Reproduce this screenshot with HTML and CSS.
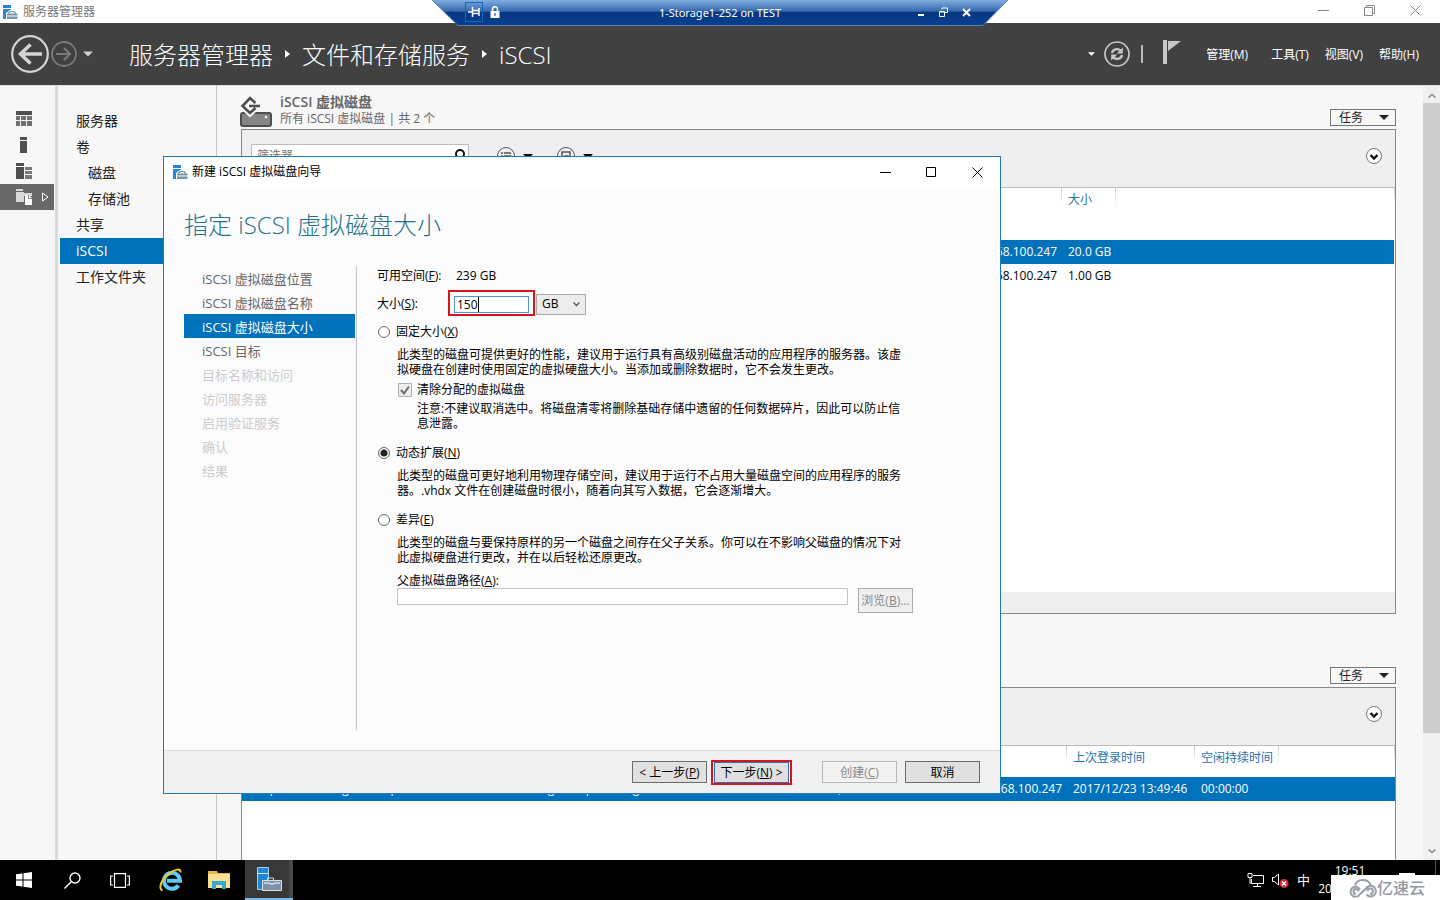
FILE: index.html
```html
<!DOCTYPE html>
<html lang="zh-CN">
<head>
<meta charset="utf-8">
<title>服务器管理器</title>
<link rel="stylesheet" href="styles.css">
</head>
<body>
<svg class="defs" aria-hidden="true">
  <symbol id="server" viewBox="0 0 16 16">
    <path fill="#2a86cf" d="M1 1h8v3H1zM1 5h8v2L5 9v6H1z"/>
    <path fill="#fff" d="M4 9l4-3h5l3 3v7H4z"/>
    <path fill="none" stroke="#7495ab" stroke-width="1.2" d="M6 9.500 8 7.500h4l2 2"/>
    <path fill="#7495ab" d="M5 9.500h10.500v2H5zM5 12.500h10.500V15H5z"/>
  </symbol>
  <symbol id="chev" viewBox="0 0 16 16">
    <circle cx="8" cy="8" r="7.500" fill="#fff" stroke="#777"/>
    <path d="M4.500 7 8 10.500 11.500 7" fill="none" stroke="#111" stroke-width="2.400"/>
  </symbol>
  <symbol id="down" viewBox="0 0 10 5"><path d="M0 0h10L5 5z" fill="currentColor"/></symbol>
</svg>

<header class="titlebar">
  <svg class="app-icon"><use href="#server"/></svg>
  <span class="app-name">服务器管理器</span>
  <div class="win-controls">
    <button aria-label="最小化"><svg width="11" height="11" viewBox="0 0 11 11"><path d="M0 5.500h11"/></svg></button>
    <button aria-label="还原"><svg width="11" height="11" viewBox="0 0 11 11"><path d="M.5 2.500h8v8h-8zM2.500 2.500v-2h8v8h-2"/></svg></button>
    <button aria-label="关闭"><svg width="11" height="11" viewBox="0 0 11 11"><path d="m.5.5 10 10m0-10-10 10"/></svg></button>
  </div>
</header>

<div class="remote-bar">
  <svg class="remote-shape" viewBox="0 0 576 26" preserveAspectRatio="none">
    <defs><linearGradient id="rb" x2="0" y2="1"><stop offset="0" stop-color="#80ace0"/><stop offset=".44" stop-color="#3569ad"/><stop offset=".48" stop-color="#07377f"/><stop offset="1" stop-color="#083f91"/></linearGradient></defs>
    <path fill="url(#rb)" d="M0 0h576l-25 25.500H26z"/>
    <path fill="none" stroke="#5f7fac" d="m0 0 26 25.500h525L576 0"/>
  </svg>
  <div class="remote-content">
    <button class="pin" aria-label="固定"><svg width="12" height="10" viewBox="0 0 12 10" fill="none" stroke="#fff" stroke-width="1.500"><path d="M0 5h4M4.500 0v10M4.500 3.500h6M4.500 6.500h6M11 1v8"/></svg></button>
    <svg class="lock" width="10" height="12" viewBox="0 0 10 12"><path d="M2.500 6V3a2.500 2.300 0 0 1 5 0v3" fill="none" stroke="#fff" stroke-width="1.500"/><path d="M.5 5h9v7h-9z" fill="#fff"/><path d="M4.500 7h1v3h-1z" fill="#07377f"/></svg>
    <span class="remote-name">1-Storage1-252 on TEST</span>
    <button aria-label="最小化会话"><svg width="8" height="10" viewBox="0 0 8 10"><path d="M1 7h6v2H1z" fill="#fff"/></svg></button>
    <button aria-label="还原会话"><svg width="9" height="10" viewBox="0 0 9 10" fill="none" stroke="#fff"><path d="M.5 5h5v4.500h-5zM.5 4.500h5M3 2.500V1h5.500v4.500H6"/></svg></button>
    <button aria-label="断开会话"><svg width="9" height="9" viewBox="0 0 9 9"><path d="m1 1 7 7m0-7-7 7" stroke="#fff" stroke-width="2"/></svg></button>
  </div>
</div>

<nav class="banner">
  <button class="round" aria-label="后退"><svg width="38" height="38" viewBox="0 0 38 38" fill="none" stroke="#d4d4d4"><circle cx="19" cy="19" r="17.800" stroke-width="2.200"/><path stroke-width="3.600" d="M31 19H9.500M19.500 9.500 9.500 19l10 9.500"/></svg></button>
  <button class="round" aria-label="前进"><svg width="26" height="26" viewBox="0 0 26 26" fill="none" stroke="#7a7a7a"><circle cx="13" cy="13" r="12" stroke-width="1.800"/><path stroke-width="2.200" d="M5 13h14M13 7l6 6-6 6"/></svg></button>
  <button class="hist" aria-label="历史记录"><svg width="10" height="6"><use href="#down"/></svg></button>
  <div class="crumbs">
    <a href="#">服务器管理器</a><svg width="5" height="8" viewBox="0 0 5 8"><path fill="#fff" d="M0 0v8l5-4z"/></svg>
    <a href="#">文件和存储服务</a><svg width="5" height="8" viewBox="0 0 5 8"><path fill="#fff" d="M0 0v8l5-4z"/></svg>
    <a href="#" class="leaf">iSCSI</a>
  </div>
  <div class="tools">
    <svg width="7" height="4"><use href="#down"/></svg>
    <button class="refresh" aria-label="刷新"><svg width="26" height="26" viewBox="0 0 26 26" fill="none" stroke="#c8c8c8"><circle cx="13" cy="13" r="12" stroke-width="1.700"/><path stroke-width="2.400" d="M8 12a5 4.500 0 0 1 8.500-2.500M18 14a5 4.500 0 0 1-8.500 2.500"/><path fill="#c8c8c8" stroke="none" d="M18.800 6.500v6h-6zM7.200 19.500v-6h6z"/></svg></button>
    <i class="bar"></i>
    <button class="flag" aria-label="通知"><svg width="18" height="24" viewBox="0 0 18 24"><path fill="#c8c8c8" d="M0 0h4v24H0zM5 1h13L5 11z"/></svg></button>
    <div class="menu"><button class="manage">管理(M)</button><button>工具(T)</button><button>视图(V)</button><button>帮助(H)</button></div>
  </div>
</nav>

<main class="workspace">
  <nav class="rail">
    <button aria-label="仪表板"><svg width="16" height="16" viewBox="0 0 16 16"><path fill="#505050" d="M0 0h16v4H0z"/><path fill="#707070" d="M0 5h4v4H0zM5 5h5v4H5zM11 5h5v4h-5zM0 10h4v5H0zM5 10h5v5H5zM11 10h5v5h-5z"/></svg></button>
    <button aria-label="本地服务器"><svg width="16" height="16" viewBox="0 0 16 16"><path fill="#505050" d="M4 0h7v3H4zM4 4h7v12H4z"/></svg></button>
    <button aria-label="所有服务器"><svg width="16" height="16" viewBox="0 0 16 16"><path fill="#505050" d="M0 0h8v3H0zM0 4h8v12H0z"/><path fill="#777" d="M9 4h7v3H9zM9 8h7v3H9zM9 12h7v4H9z"/></svg></button>
    <button class="on" aria-label="文件和存储服务"><svg width="17" height="16" viewBox="0 0 17 16"><path fill="#d8d8d8" d="M0 0h7v2H0zM0 3h8v1h8v3H8v6H0z"/><path fill="#fff" d="M9 6h4l3 3v7H9z"/><path fill="none" stroke="#888" d="M12.500 6v3.500H16"/></svg><svg class="arrow" width="7" height="10" viewBox="0 0 7 10"><path fill="none" stroke="#fff" d="M.5 1v8L6 5z"/></svg></button>
  </nav>
  <nav class="side">
    <a href="#">服务器</a><a href="#">卷</a><a href="#" class="sub">磁盘</a><a href="#" class="sub">存储池</a><a href="#">共享</a><a href="#" class="on">iSCSI</a><a href="#">工作文件夹</a>
  </nav>
  <div class="content">
    <section class="tile first">
      <header class="tile-head">
        <svg width="32" height="31" viewBox="0 0 32 31"><rect x="1" y="17" width="30" height="13" rx="2" fill="#858585" stroke="#4d4d4d" stroke-width="2"/><circle cx="26" cy="21" r="1.200" fill="#fff"/><path d="M16 7 10 1.500 1.500 10 10 18l6-5.500" fill="none" stroke="#f7f7f7" stroke-width="5"/><path d="m15.500 7-5.500-5L2.500 10 10 17l5.500-5M9 10h11" fill="none" stroke="#4d4d4d" stroke-width="2.600"/></svg>
        <div class="tile-title"><h2>iSCSI 虚拟磁盘</h2><p>所有 iSCSI 虚拟磁盘 | 共 2 个</p></div>
        <button class="tasks">任务<svg width="10" height="5"><use href="#down"/></svg></button>
      </header>
      <div class="panel">
        <div class="filter">
          <label class="search"><input type="text" placeholder="筛选器" aria-label="筛选器"><svg width="12" height="14" viewBox="0 0 12 14" fill="none" stroke="#111" stroke-width="2"><circle cx="7" cy="5" r="4"/><path d="m4 8-4 5"/></svg></label>
          <button aria-label="筛选条件"><svg width="18" height="18" viewBox="0 0 18 18" fill="none" stroke="#555"><circle cx="9" cy="9" r="8.500"/><path stroke-width="1.500" d="M4 6h2m1 0h7M4 9h2m1 0h7M4 12h2m1 0h7"/></svg><svg width="10" height="5"><use href="#down"/></svg></button>
          <button aria-label="保存查询"><svg width="18" height="18" viewBox="0 0 18 18" fill="none" stroke="#555"><circle cx="9" cy="9" r="8.500"/><path stroke-width="1.500" d="M5 5h8v8H5zM7 9h4v4"/></svg><svg width="10" height="5"><use href="#down"/></svg></button>
          <button class="expand" aria-label="展开"><svg width="16" height="16"><use href="#chev"/></svg></button>
        </div>
        <table class="disks">
          <colgroup><col class="c-target"><col class="c-size"><col></colgroup>
          <thead><tr><th></th><th>大小</th><th></th></tr></thead>
          <tbody>
            <tr class="on"><td class="end">192.168.100.247</td><td>20.0 GB</td><td></td></tr>
            <tr><td class="end">192.168.100.247</td><td>1.00 GB</td><td></td></tr>
          </tbody>
        </table>
        <div class="panel-foot"></div>
      </div>
    </section>
    <section class="tile second">
      <header class="tile-head"><button class="tasks">任务<svg width="10" height="5"><use href="#down"/></svg></button></header>
      <div class="panel">
        <div class="filter"><button class="expand" aria-label="展开"><svg width="16" height="16"><use href="#chev"/></svg></button></div>
        <table class="targets">
          <colgroup><col class="c-name"><col class="c-iqn"><col class="c-init"><col class="c-login"><col class="c-idle"><col></colgroup>
          <thead><tr><th></th><th></th><th></th><th>上次登录时间</th><th>空闲持续时间</th><th></th></tr></thead>
          <tbody><tr class="on"><td>esxp-node-storage-test.1p</td><td>-storage-testp-0storage</td><td class="end">, iSCSI Initiator Address:192.168.100.247</td><td>2017/12/23 13:49:46</td><td>00:00:00</td><td></td></tr></tbody>
        </table>
      </div>
    </section>
  </div>
  <div class="scroll" aria-hidden="true">
    <svg width="8" height="5" viewBox="0 0 8 5"><path d="m.5 4.500 3.500-3 3.500 3"/></svg>
    <div class="track"><i></i></div>
    <svg width="8" height="5" viewBox="0 0 8 5"><path d="m.5.5 3.500 3 3.500-3"/></svg>
  </div>
</main>

<div class="dialog" role="dialog" aria-labelledby="dlg">
  <header class="dlg-bar">
    <svg class="app-icon"><use href="#server"/></svg><span id="dlg">新建 iSCSI 虚拟磁盘向导</span>
    <div class="dlg-controls">
      <button aria-label="最小化"><svg width="11" height="11" viewBox="0 0 11 11"><path d="M0 5.500h11"/></svg></button>
      <button aria-label="最大化"><svg width="11" height="11" viewBox="0 0 11 11"><path d="M.5.5h9v9h-9z"/></svg></button>
      <button aria-label="关闭"><svg width="11" height="11" viewBox="0 0 11 11"><path d="m.5.5 10 10m0-10-10 10"/></svg></button>
    </div>
  </header>
  <h1>指定 iSCSI 虚拟磁盘大小</h1>
  <div class="dlg-body">
    <ol class="steps">
      <li>iSCSI 虚拟磁盘位置</li><li>iSCSI 虚拟磁盘名称</li><li class="on">iSCSI 虚拟磁盘大小</li><li>iSCSI 目标</li><li class="off">目标名称和访问</li><li class="off">访问服务器</li><li class="off">启用验证服务</li><li class="off">确认</li><li class="off">结果</li>
    </ol>
    <form class="form">
      <div class="row free"><span class="lbl">可用空间(<u>F</u>):</span><output>239 GB</output></div>
      <div class="row size"><label class="lbl" for="size">大小(<u>S</u>):</label>
        <span class="mark"><input id="size" type="text" value="150"><i class="caret"></i></span>
        <span class="unit"><select aria-label="单位"><option>GB</option><option>MB</option><option>TB</option></select><svg width="7" height="5" viewBox="0 0 7 5"><path d="m.5.5 3 3 3-3" fill="none" stroke="#555" stroke-width="1.300"/></svg></span>
      </div>
      <label class="opt"><input type="radio" name="kind">固定大小(<u>X</u>)</label>
      <p class="desc">此类型的磁盘可提供更好的性能，建议用于运行具有高级别磁盘活动的应用程序的服务器。该虚<br>拟硬盘在创建时使用固定的虚拟硬盘大小。当添加或删除数据时，它不会发生更改。</p>
      <label class="chk"><input type="checkbox" checked disabled><svg width="14" height="14" viewBox="0 0 14 14"><path d="M.5.5h13v13H.5z" fill="#eee" stroke="#b0b0b0"/><path d="m3 7 3 3.500L11 3.500" fill="none" stroke="#6d6d6d" stroke-width="2"/></svg>清除分配的虚拟磁盘</label>
      <p class="desc hint">注意:不建议取消选中。将磁盘清零将删除基础存储中遗留的任何数据碎片，因此可以防止信<br>息泄露。</p>
      <label class="opt later"><input type="radio" name="kind" checked>动态扩展(<u>N</u>)</label>
      <p class="desc">此类型的磁盘可更好地利用物理存储空间，建议用于运行不占用大量磁盘空间的应用程序的服务<br>器。.vhdx 文件在创建磁盘时很小，随着向其写入数据，它会逐渐增大。</p>
      <label class="opt later"><input type="radio" name="kind">差异(<u>E</u>)</label>
      <p class="desc">此类型的磁盘与要保持原样的另一个磁盘之间存在父子关系。你可以在不影响父磁盘的情况下对<br>此虚拟硬盘进行更改，并在以后轻松还原更改。</p>
      <label class="path-lbl" for="path">父虚拟磁盘路径(<u>A</u>):</label>
      <div class="path"><input id="path" type="text" disabled><button type="button" disabled>浏览(<u>B</u>)...</button></div>
    </form>
  </div>
  <footer class="dlg-foot">
    <button>&lt; 上一步(<u>P</u>)</button>
    <span class="mark"><button class="next">下一步(<u>N</u>) &gt;</button></span>
    <button class="create" disabled>创建(<u>C</u>)</button>
    <button>取消</button>
  </footer>
</div>

<footer class="taskbar">
  <button aria-label="开始"><svg width="16" height="16" viewBox="0 0 16 16"><path fill="#fff" d="m0 2.300 6.500-.9v6.100H0zM7.500 1.200 16 0v7.500H7.500zM0 8.500h6.500v6.100L0 13.700zM7.500 8.500H16V16l-8.500-1.200z"/></svg></button>
  <button aria-label="搜索"><svg width="17" height="17" viewBox="0 0 17 17" fill="none" stroke="#fff" stroke-width="1.400"><circle cx="11" cy="6" r="5"/><path d="m7.500 9.500-7 7"/></svg></button>
  <button aria-label="任务视图"><svg width="20" height="15" viewBox="0 0 20 15" fill="none" stroke="#fff" stroke-width="1.200"><path d="M4.500.6h11v13.800h-11zM3 3H.6v9H3M17 3h2.400v9H17"/></svg></button>
  <button class="ie" aria-label="Internet Explorer"><svg width="24" height="24" viewBox="0 0 24 24" fill="none"><path stroke="#5fcaf4" stroke-width="4" d="M19.500 17.500A8 8 0 1 1 21 12.800H8"/><path stroke="#f3ce2b" stroke-width="2" d="M3.500 22.500C-1 21 2 11 10 5.500 16 1 22 0 21.500 4.500"/></svg></button>
  <button aria-label="文件资源管理器"><svg width="22" height="18" viewBox="0 0 22 18"><path fill="#e8b84f" d="M0 0h9l1 2h12v4H0z"/><path fill="#fbe08f" d="M0 3h22v14H0z"/><path fill="#35a6d5" d="M4 10h14v8h-4v-4H8v4H4z"/></svg></button>
  <button class="on" aria-label="服务器管理器"><svg width="26" height="26" viewBox="0 0 26 26"><path fill="#1f86d6" stroke="#9fd1f5" d="M1.500 1.500h11v22h-11z"/><path stroke="#d6ecfb" d="M1 7.500h12"/><path fill="none" stroke="#c9d6e0" d="M11.500 14v-2h6v2"/><path fill="#7e93a8" stroke="#d6e0e8" d="M6.500 14.500h19v10h-19z"/><path stroke="#fff" fill="none" d="M8 17h6v1h4v-1h6"/></svg></button>
  <div class="tray">
    <svg width="17" height="14" viewBox="0 0 17 14" fill="none" stroke="#fff"><path d="M6 2.500h10.500v8h-12V6M1 .5h4v4H1zM3 5v6M6 13.500h8M10.500 11v2"/></svg>
    <svg width="17" height="15" viewBox="0 0 17 15"><path fill="none" stroke="#fff" d="M.5 4.500h2l4-3.500v11l-4-3.500h-2z"/><circle cx="12" cy="10.500" r="4.500" fill="#d5283c"/><path stroke="#fff" stroke-width="1.400" d="m10 8.500 4 4m0-4-4 4"/></svg>
    <span class="ime">中</span>
    <div class="clock"><span>19:51</span><span>2017/12/24</span></div>
    <i class="action"></i><i class="peek"></i>
  </div>
</footer>
<div class="watermark"><svg width="28" height="21" viewBox="0 0 28 21" fill="none" stroke="#999fa9" stroke-width="2"><path d="M6 8.500a8 7 0 0 1 15.500-.5"/><path d="M11 12.500a5 5 0 1 0 0 4.500l6-5.500a5.300 5.300 0 1 1 .5 6M9.500 14.500a2.500 2.500 0 1 0-2.500 2.500M18.500 14a2.700 2.700 0 1 1 2.500 3"/></svg><span>亿速云</span></div>
</body>
</html>
```

FILE: styles.css
```css
* { box-sizing: border-box; }
body {
  margin: 0; height: 100vh; display: flex; flex-direction: column; overflow: hidden; position: relative;
  font: 12px/16px "Open Sans", "Noto Sans CJK SC", sans-serif; color: #000; background: #f7f7f7;
}
button, input, select { font: inherit; color: inherit; margin: 0; }
button { background: none; border: 0; padding: 0; white-space: nowrap; }
a { color: inherit; text-decoration: none; }
svg { display: block; flex: none; }
h1, h2, p, ol { margin: 0; padding: 0; }
.defs { position: absolute; width: 0; height: 0; }
.app-icon { width: 16px; height: 16px; }

.titlebar { height: 23px; flex: none; background: #fff; display: flex; align-items: center; padding-left: 2px; gap: 5px; color: #777; }
.win-controls { margin-left: auto; display: flex; padding: 0 2px 3px 0; }
.win-controls button { width: 46px; height: 20px; display: grid; place-items: center; }
.win-controls svg { fill: none; stroke: #888; }

.remote-bar { position: absolute; top: 0; left: 50%; width: 576px; height: 26px; margin-left: -288px; color: #fff; }
.remote-shape { position: absolute; width: 100%; height: 100%; }
.remote-content { position: relative; display: flex; align-items: center; height: 24px; padding: 0 30px 0 33px; }
.remote-name { flex: 1; text-align: center; padding: 2px 0 0 31px; font-family: "Noto Sans", sans-serif; font-size: 11px; }
.remote-content button { width: 23px; display: grid; place-items: center; }
.remote-content .pin { width: 18px; height: 20px; border: 1px solid #1769bd; }
.lock { margin-left: 7px; }

.banner { height: 62px; flex: none; background: #414141; color: #fff; display: flex; align-items: center; padding: 0 21px 0 11px; }
.round { margin-right: 2px; }
.hist { color: #d0d0d0; margin-left: 4px; }
.crumbs { display: flex; align-items: center; gap: 12px; margin-left: 36px; font-size: 24px; line-height: 32px; font-weight: 300; white-space: nowrap; }
.crumbs a { padding-top: 2px; }
.tools { margin-left: auto; display: flex; align-items: center; }
.refresh { margin-left: 9px; }
.bar { width: 2px; height: 18px; background: #bdbdbd; margin-left: 11px; }
.flag { margin: 0 25px 4px 20px; }
.menu { display: flex; gap: 16px; padding-top: 2px; }
.manage { margin-right: 7px; }

.workspace { flex: 1; min-height: 0; display: flex; border-top: 1px solid #ddd; }
.rail { width: 58px; flex: none; border-right: 3px solid #d9d9d9; padding-top: 20px; margin-right: 2px; }
.rail button { width: 54px; height: 26px; display: flex; align-items: center; padding-left: 16px; }
.rail .on { background: #686868; }
.rail .arrow { margin-left: 9px; }
.side { width: 157px; flex: none; border-right: 1px solid #c6c6c6; padding-top: 22px; font-size: 14px; color: #222; }
.side a { display: block; height: 26px; line-height: 26px; padding-left: 16px; }
.side .sub { padding-left: 28px; }
.side .on { background: #0072bc; color: #fff; }
.content { flex: 1; min-width: 0; padding: 0 27px 0 24px; overflow: hidden; }

.tile-head { height: 43px; display: flex; align-items: center; gap: 8px; color: #666; }
.tile-head > svg { margin: 8px 0 0 -1px; }
.tile-title { padding-top: 5px; }
.tile-title h2 { font-size: 14px; line-height: 18px; font-weight: 600; }
.tile-title p { font-size: 12px; line-height: 16px; }
.tasks { width: 66px; height: 17px; border: 1px solid #767676; margin: 19px 0 0 auto; display: flex; align-items: center; justify-content: space-between; padding: 1px 6px 0 8px; color: #222; }
.panel { border: 1px solid #888; background: #fff; }
.filter { height: 58px; background: #efefef; border-bottom: 1px solid #bbb; padding: 0 13px 5px 9px; display: flex; align-items: center; }
.filter button { display: flex; align-items: center; gap: 8px; margin-left: 24px; }
.filter .search { width: 218px; height: 24px; background: #fff; border: 1px solid #bbb; display: flex; align-items: center; padding: 0 3px 0 5px; margin-right: 4px; }
.search input { border: 0; background: none; flex: 1; min-width: 0; padding: 0; }
.filter .expand { margin-left: auto; }
table { width: 100%; border-collapse: collapse; table-layout: fixed; }
th { height: 52px; vertical-align: top; text-align: left; padding: 4px 0 0 6px; font-weight: 400; color: #1d75ae; white-space: nowrap; background: linear-gradient(#c8c8c8, #fff) right top / 1px 16px no-repeat; }
.targets th { height: 31px; }
td { height: 24px; padding: 0 0 0 6px; white-space: nowrap; overflow: visible; }
td.end { text-align: right; padding-right: 5px; }
td:first-child { padding-left: 9px; }
tr.on { background: #0072bc; color: #fff; }
.disks tr.on { border-right: 1px solid #fff; }
.c-target { width: 820px; } .c-size { width: 54px; }
.c-name { width: 267px; } .c-iqn { width: 222px; } .c-init { width: 336px; } .c-login { width: 128px; } .c-idle { width: 84px; }
.disks { margin-bottom: 304px; }
.panel-foot { height: 21px; background: #efefef; }
.second { margin-top: 30px; }
.second .panel { height: 240px; }

.scroll { width: 17px; flex: none; background: #f0f0f0; display: flex; flex-direction: column; align-items: center; padding: 7px 0 6px; }
.scroll svg { fill: none; stroke: #888; stroke-width: 1.5; }
.track { flex: 1; width: 100%; margin: 5px 0; }
.track i { display: block; height: 85%; background: #cdcdcd; }

.dialog { position: absolute; left: 163px; top: 156px; width: 838px; height: 638px; border: 1px solid #2079b8; background: #fcfcfc; display: flex; flex-direction: column; }
.dlg-bar { height: 30px; flex: none; background: #fff; display: flex; align-items: center; gap: 4px; padding-left: 8px; }
.dlg-controls { margin-left: auto; display: flex; }
.dlg-controls button { width: 46px; height: 30px; display: grid; place-items: center; }
.dlg-controls svg { fill: none; stroke: #000; }
.dialog h1 { font-size: 24px; line-height: 32px; font-weight: 300; color: #26728e; margin: 22px 0 25px 20px; }
.dlg-body { flex: 1; min-height: 0; display: flex; padding: 0 20px 20px; }
.steps { width: 173px; flex: none; list-style: none; border-right: 1px solid #c4c4c4; padding-right: 1px; color: #666; font-size: 13px; }
.steps li { height: 24px; line-height: 26px; padding-left: 18px; white-space: nowrap; }
.steps .on { background: #0072bc; color: #fff; }
.steps .off { color: #ccc; }
.form { flex: 1; padding: 1px 0 0 20px; }
.row { display: flex; align-items: center; }
.free { height: 18px; }
.lbl { width: 79px; }
.size { height: 26px; margin: 5px 0 8px; }
.size .lbl { width: 71px; padding-top: 2px; }
.mark { border: 2px solid #d9141c; display: flex; position: relative; }
.size .mark { padding: 4px 4px 1px; width: 87px; }
.mark input { width: 100%; height: 17px; border: 1px solid #4c94d5; padding: 0 2px; line-height: 15px; background: #fff; outline: 0; }
.caret { position: absolute; left: 28px; top: 5px; width: 1px; height: 15px; background: #000; }
.unit { position: relative; margin: 2px 0 0 1px; }
.unit select { appearance: none; display: block; width: 50px; height: 21px; border: 1px solid #aaa; border-radius: 0; background: #ececec; padding: 0 5px; }
.unit svg { position: absolute; right: 6px; top: 8px; }
.opt, .chk { display: flex; align-items: center; height: 16px; }
.opt input { appearance: none; width: 12px; height: 12px; border: 1px solid #666; border-radius: 50%; background: #fff; margin: 0 6px 0 1px; }
.opt input:checked { background: radial-gradient(circle, #222 3px, #fff 4px); }
.opt.later { margin-top: 14px; }
.desc { margin: 7px 0 0 20px; line-height: 15px; white-space: nowrap; }
.chk { margin: 5px 0 0 21px; gap: 5px; }
.chk input { position: absolute; opacity: 0; margin: 0; }
.desc.hint { margin: 3px 0 0 40px; }
.path-lbl { display: block; height: 15px; line-height: 15px; margin: 8px 0 0 20px; }
.path { display: flex; gap: 10px; margin-left: 20px; align-items: flex-start; }
.path input { width: 451px; height: 17px; border: 1px solid #c4c4c4; background: #fff; }
.path button { width: 55px; height: 25px; border: 1px solid #acacac; background: #f0f0f0; color: #888; }
.dlg-foot { height: 43px; flex: none; background: #f0f0f0; border-top: 1px solid #dcdcdc; display: flex; align-items: center; justify-content: flex-end; padding-right: 20px; }
.dlg-foot button { width: 75px; height: 22px; border: 1px solid #6c6c6c; background: #e0e0e0; padding-top: 2px; }
.dlg-foot .mark { margin: 0 30px 0 4px; padding: 0 1px; }
.dlg-foot .next { border-color: #2c73b5; height: 21px; }
.dlg-foot .create { border-color: #b8b8b8; background: #f2f2f2; color: #888; margin-right: 8px; }

.taskbar { height: 40px; flex: none; background: #000; display: flex; color: #fff; }
.taskbar button { width: 48px; height: 40px; display: grid; place-items: center; }
.taskbar .ie { margin-left: 3px; }
.taskbar .on { background: linear-gradient(90deg, #383838 44px, #4a4a4a 44px); border-bottom: 2px solid #76b9ed; margin-left: 2px; }
.tray { margin-left: auto; display: flex; align-items: center; gap: 8px; }
.ime { font-size: 13px; }
.clock { width: 64px; text-align: center; line-height: 18px; }
.clock span { display: block; }
.action { width: 16px; height: 14px; background: #fff; margin-left: 9px; }
.peek { width: 5px; height: 40px; border-left: 1px solid #555; margin-left: 12px; }
.watermark { position: absolute; right: 0; bottom: 0; width: 109px; height: 25px; background: #fff; display: flex; align-items: center; padding-left: 18px; color: #9298a3; font-size: 16px; font-weight: 500; }
```
